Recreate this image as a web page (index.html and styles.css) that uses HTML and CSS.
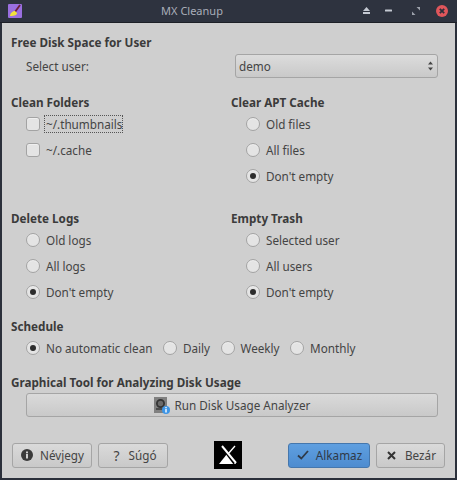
FILE: index.html
```html
<!DOCTYPE html>
<html lang="hu">
<head>
<meta charset="utf-8">
<title>MX Cleanup</title>
<link rel="stylesheet" href="styles.css">
</head>
<body>
<div class="window">
  <header class="titlebar">
    <svg class="app-icon" width="14" height="14" viewBox="0 0 14 14"><rect width="14" height="14" rx="1" fill="#9a6fe0"/><path d="M12 1 7 8" stroke="#6e1f3a" stroke-width="1.8"/><path d="M2 12c0-3 3-5 5-5l2 2c0 2-2 3-7 3z" fill="#f2e23a"/></svg>
    <span class="title">MX Cleanup</span>
    <div class="win-buttons">
      <svg class="wb" width="9" height="9" viewBox="0 0 9 9"><path d="M4.5 1 8 5H1z" fill="#c4c9d2"/><rect x="1" y="6" width="7" height="2" fill="#c4c9d2"/></svg>
      <svg class="wb" width="7" height="3" viewBox="0 0 7 3"><rect width="7" height="2" y=".5" rx=".5" fill="#c4c9d2"/></svg>
      <svg class="wb" width="8" height="8" viewBox="0 0 8 8"><path d="M4.5 0H8v3.5zM3.500 8H0V4.500z" fill="#9ca1ab"/></svg>
      <svg class="close" width="12" height="12" viewBox="0 0 12 12"><circle cx="6" cy="6" r="6" fill="#e0565b"/><path d="M3.800 3.800l4.400 4.400M8.200 3.800l-4.400 4.400" stroke="#2b303b" stroke-width="1.800"/></svg>
    </div>
  </header>
  <main class="content">
    <h2 class="heading first">Free Disk Space for User</h2>
    <div class="user-row">
      <span class="user-label">Select user:</span>
      <div class="select"><span>demo</span>
        <svg width="7" height="12" viewBox="0 0 7 12"><path d="M3.500 1.500 6 4.500H1zM3.500 10.500 1 7.500h5z" fill="#444"/></svg>
      </div>
    </div>
    <div class="columns top">
      <section>
        <h2 class="heading">Clean Folders</h2>
        <label class="opt"><span class="check"></span><span class="focus">~/.thumbnails</span></label>
        <label class="opt"><span class="check"></span><span class="plain">~/.cache</span></label>
      </section>
      <section>
        <h2 class="heading">Clear APT Cache</h2>
        <label class="opt"><span class="radio"></span>Old files</label>
        <label class="opt"><span class="radio"></span>All files</label>
        <label class="opt"><span class="radio on"></span>Don't empty</label>
      </section>
    </div>
    <div class="columns lower">
      <section>
        <h2 class="heading">Delete Logs</h2>
        <label class="opt"><span class="radio"></span>Old logs</label>
        <label class="opt"><span class="radio"></span>All logs</label>
        <label class="opt"><span class="radio on"></span>Don't empty</label>
      </section>
      <section>
        <h2 class="heading">Empty Trash</h2>
        <label class="opt"><span class="radio"></span>Selected user</label>
        <label class="opt"><span class="radio"></span>All users</label>
        <label class="opt"><span class="radio on"></span>Don't empty</label>
      </section>
    </div>
    <h2 class="heading schedule">Schedule</h2>
    <div class="schedule-row">
      <label class="opt"><span class="radio on"></span>No automatic clean</label>
      <label class="opt"><span class="radio"></span>Daily</label>
      <label class="opt"><span class="radio"></span>Weekly</label>
      <label class="opt"><span class="radio"></span>Monthly</label>
    </div>
    <h2 class="heading tool">Graphical Tool for Analyzing Disk Usage</h2>
    <button class="btn wide">
      <svg width="16" height="17" viewBox="0 0 16 17"><rect width="13" height="16" fill="#808080"/><circle cx="6.500" cy="6.500" r="3.600" fill="#6a6a6a" stroke="#333" stroke-width="1.800"/><path d="M2 11h9v2H2z" fill="#4a4a4a"/><circle cx="12" cy="13" r="4" fill="#3d95e6"/><rect x="11.300" y="12" width="1.400" height="3.500" fill="#fff"/><rect x="11.300" y="10" width="1.400" height="1.300" fill="#fff"/></svg>
      Run Disk Usage Analyzer
    </button>
  </main>
  <footer class="footer">
    <button class="btn about">
      <svg width="12" height="12" viewBox="0 0 12 12"><circle cx="6" cy="6" r="6" fill="#3a3a3a"/><rect x="5" y="5" width="2" height="4.500" fill="#cfcfcf"/><rect x="5" y="2.500" width="2" height="1.800" fill="#cfcfcf"/></svg>
      Névjegy
    </button>
    <button class="btn help"><span class="q">?</span>Súgó</button>
    <svg class="logo" width="28" height="28" viewBox="0 0 28 28"><rect width="28" height="28"/><path d="M5 23 13 13l9 10z" fill="#fff"/><path d="M9 6l12 16" stroke="#000" stroke-width="4"/><path d="M8 5l14 17" stroke="#fff" stroke-width="2"/><path d="M21 5 14 13" stroke="#fff" stroke-width="1.300"/></svg>
    <button class="btn apply">
      <svg width="12" height="10" viewBox="0 0 12 10"><path d="M1 5.500 4.300 8.500 11 1" fill="none" stroke="#2f3a48" stroke-width="1.800"/></svg>
      Alkamaz
    </button>
    <button class="btn close-btn">
      <svg width="9" height="9" viewBox="0 0 9 9"><path d="M1 1l7 7M8 1 1 8" stroke="#333" stroke-width="2"/></svg>
      Bezár
    </button>
  </footer>
</div>
</body>
</html>
```
FILE: styles.css
```css
* { box-sizing: border-box; }
html, body { margin: 0; padding: 0; }
body {
  width: 457px;
  height: 480px;
  overflow: hidden;
  font-family: "Noto Sans", sans-serif;
  font-size: 11.7px;
  color: #444;
}
.window {
  width: 457px;
  height: 480px;
  background: #cfcfcf;
  border: 2px solid #2b303b;
  border-top: 0;
  display: flex;
  flex-direction: column;
}
.titlebar {
  height: 23px;
  margin: 0 -2px;
  background: #2e333f;
  border-bottom: 1px solid #1d2027;
  display: flex;
  align-items: center;
  padding: 0 9px 1px 8px;
  flex: none;
}
.title {
  color: #a9aeb9;
  flex: 1;
  text-align: center;
  font-size: 11px;
}
.win-buttons {
  display: flex;
  align-items: center;
}
.wb { flex: none; }
.win-buttons .wb:nth-child(1) { margin-right: 14px; }
.win-buttons .wb:nth-child(2) { margin-right: 20px; }
.win-buttons .wb:nth-child(3) { margin-right: 16px; }
.close { flex: none; }
.content {
  padding: 0 17px 0 9px;
  flex: 1;
}
.heading {
  margin: 0;
  font-size: 11.7px;
  font-weight: 700;
  height: 17px;
  line-height: 17px;
  color: #3b3b3b;
}
.heading.first { margin-top: 11px; }
.user-row {
  display: flex;
  align-items: center;
  height: 24px;
  margin-top: 3px;
}
.user-label { margin-left: 15px; width: 209px; }
.select {
  width: 203px;
  height: 24px;
  flex: none;
  border: 1px solid #a5a5a5;
  border-radius: 3px;
  background: linear-gradient(#dcdcdc, #c9c9c9);
  display: flex;
  align-items: center;
  justify-content: space-between;
  padding: 0 3px;
}
.columns {
  display: grid;
  grid-template-columns: 220px 1fr;
}
.columns.top { margin-top: 16px; }
.columns.lower { margin-top: 21px; }
.opt {
  display: flex;
  align-items: center;
  height: 26px;
  padding-left: 12px;
  white-space: nowrap;
}
.check, .radio {
  width: 14px;
  height: 14px;
  flex: none;
  margin-left: 3px;
  margin-right: 5px;
  background: #e4e4e4;
  border: 1px solid #a3a3a3;
  box-shadow: inset 0 1px 0 #efefef;
}
.check { border-radius: 3px; margin-right: 2px; }
.radio { border-radius: 50%; position: relative; margin-right: 6px; }
.radio.on::after {
  content: "";
  position: absolute;
  left: 3px;
  top: 3px;
  width: 6px;
  height: 6px;
  border-radius: 50%;
  background: #2d2d2d;
}
.focus {
  border: 1px dotted #555;
  padding: 0 0 0 1px;
  height: 18px;
  line-height: 16px;
  margin-left: 2px;
}
.plain { margin-left: 4px; }
.heading.schedule { margin-top: 13px; }
.schedule-row {
  display: flex;
  gap: 7.5px;
  padding-left: 12px;
  height: 26px;
}
.schedule-row .opt { padding-left: 0; }
.heading.tool { margin-top: 13px; }
.btn {
  font: inherit;
  color: #444;
  height: 24px;
  border: 1px solid #a5a5a5;
  border-radius: 3px;
  background: linear-gradient(#dadada, #c9c9c9);
  display: flex;
  align-items: center;
  justify-content: center;
  gap: 5px;
  padding: 0;
}
.btn.wide {
  width: 412px;
  margin: 2px 0 0 15px;
}
.footer {
  display: flex;
  align-items: center;
  height: 28px;
  padding-left: 10px;
  margin-bottom: 9px;
  flex: none;
}
.footer .btn { height: 25px; }
.about { width: 80px; gap: 7px; padding-left: 1px; }
.help { width: 70px; margin-left: 6px; gap: 9px; padding-left: 4px; }
.q { font-size: 14px; }
.logo { margin-left: 46px; flex: none; }
.apply {
  width: 82px;
  margin-left: 46px;
  background: linear-gradient(#5f9fe0, #4d8cd0);
  border-color: #4577ad;
  color: #2f3a48;
  gap: 7px;
  padding-left: 1px;
}
.close-btn { width: 69px; margin-left: 6px; gap: 9px; padding-left: 2px; }
```
